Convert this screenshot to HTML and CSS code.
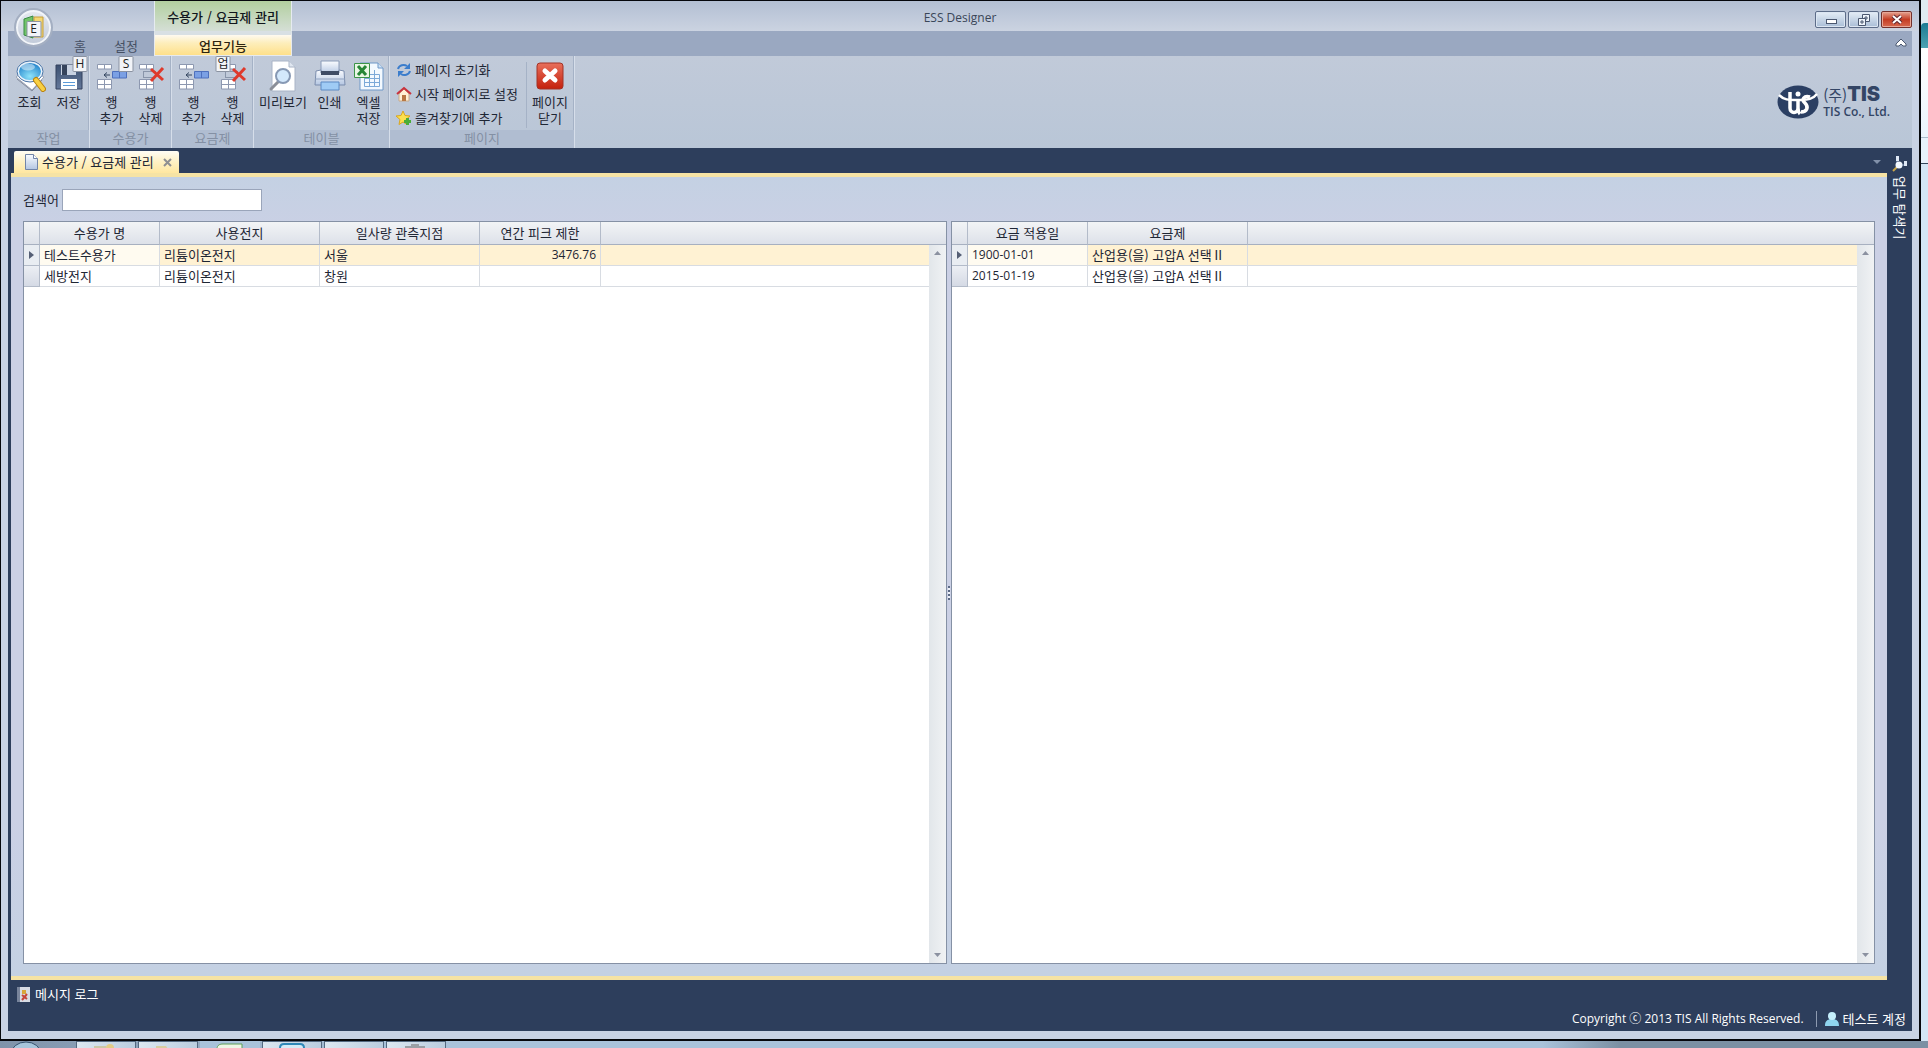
FILE: index.html
```
<!DOCTYPE html>
<html lang="ko">
<head>
<meta charset="utf-8">
<title>ESS Designer</title>
<link rel="stylesheet" href="styles.css">
</head>
<body>
<svg class="defs" aria-hidden="true">
  <defs>
    <linearGradient id="steel" x1="0" y1="0" x2="0" y2="1"><stop offset="0" stop-color="#fafcff"/><stop offset="1" stop-color="#b4c6e2"/></linearGradient>
    <linearGradient id="red" x1="0" y1="0" x2="0" y2="1"><stop offset="0" stop-color="#e8705c"/><stop offset="1" stop-color="#c4200c"/></linearGradient>
    <radialGradient id="lens" cx=".5" cy=".75" r=".8"><stop offset="0" stop-color="#8fe4fa"/><stop offset="1" stop-color="#1173c4"/></radialGradient>
    <linearGradient id="disk" x1="0" y1="0" x2="0" y2="1"><stop offset="0" stop-color="#3c5070"/><stop offset="1" stop-color="#65799b"/></linearGradient>
    <g id="cells"><path d="M1.500 1.500h14v4.500h-14zM1.500 16.500h14v9.500h-14zM8.500 16.500v9.500M1.500 21.500h14" fill="#fff" stroke="#8d98b0"/><path d="M8.500 1.500v4.500" stroke="#8d98b0"/></g>
    <symbol id="row-add" viewBox="0 0 32 32"><use href="#cells" y="3"/><path d="M16.500 11.500h14v6.500h-14zM23.500 11.500v6.500" fill="#7ba0e4" stroke="#4e70bd"/><path d="M14 15H8m3-2.500L8 15l3 2.500" fill="none" stroke="#33455f"/></symbol>
    <symbol id="row-del" viewBox="0 0 32 32"><use href="#cells" x="3" y="3"/><path d="M8.500 11.500h12v6h-12z" fill="none" stroke="#53617b" stroke-dasharray="1 1"/><path d="M16 9l12 11M28 8L16 21" stroke="#df3a2c" stroke-width="3"/></symbol>
  </defs>
</svg>
<div class="desktop">
  <div class="window">
    <header class="titlebar">
      <h1 class="app-title">ESS Designer</h1>
      <div class="context-title">수용가 / 요금제 관리</div>
      <div class="window-buttons">
        <button type="button" aria-label="최소화"><svg width="14" height="14"><rect x="2.500" y="6.500" width="10" height="4" fill="#fff" stroke="#4b5870"/></svg></button>
        <button type="button" aria-label="이전 크기로"><svg width="14" height="14" fill="#eef4fb" stroke="#4b5870"><path d="M5.500 1.500h7v7h-7zM8 4h2v2H8z"/><path d="M1.500 5.500h7v7h-7z"/><path d="M4 8h2v2H4z"/></svg></button>
        <button type="button" class="close" aria-label="닫기"><svg width="14" height="14"><path d="M3 3l8 7M11 3l-8 7" stroke="#5f2730" stroke-width="4"/><path d="M3 3l8 7M11 3l-8 7" stroke="#fff" stroke-width="2"/></svg></button>
      </div>
      <nav class="ribbon-tabs">
        <a href="#home">홈<kbd>H</kbd></a>
        <a href="#settings">설정<kbd>S</kbd></a>
      </nav>
      <a class="context-tab" href="#work">업무기능<kbd>업</kbd></a>
      <div class="tab-rest"><button type="button" aria-label="리본 최소화"><svg width="12" height="10"><path d="M1 8v-2l5-5 5 5v2H8L6 6 4 8z" fill="#fff" stroke="#4b5870"/></svg></button></div>
      <button type="button" class="app-button" aria-label="메뉴"><svg width="24" height="26" viewBox="0 0 24 26"><path d="M2 4l9-3v22l-9-3z" fill="#72c46a" stroke="#398b43"/><path d="M12 2h9v20h-9z" fill="#f3d774" stroke="#c69f3a"/><path d="M5 7h13v13H5z" fill="#e9f5df"/></svg><kbd>E</kbd></button>
    </header>

    <div class="ribbon">
      <section class="group">
        <div class="items">
          <button type="button"><svg width="32" height="32" viewBox="0 0 32 32"><path d="M2 17L14 8l16 9-12 13z" fill="#fff" stroke="#9fa6b5"/><path d="M3 19l15 12 10-11" fill="none" stroke="#848c9e"/><ellipse cx="16" cy="11.500" rx="12" ry="9.500" fill="url(#lens)" stroke="#e8f2fb" stroke-width="2"/><ellipse cx="16" cy="11.500" rx="13" ry="10.500" fill="none" stroke="#4c76a8"/><ellipse cx="14" cy="7" rx="7" ry="3.500" fill="#fff" opacity=".45"/><path d="M22 20l7 9" stroke="#b98310" stroke-width="6" stroke-linecap="round"/><path d="M22 20l7 9" stroke="#f8cf42" stroke-width="4" stroke-linecap="round"/></svg><span>조회</span></button>
          <button type="button"><svg width="32" height="32" viewBox="0 0 32 32"><path d="M3 5h23l3 3v21H3z" fill="url(#disk)" stroke="#34435e"/><path d="M8 5h15v10H8z" fill="#c8d2e2"/><path d="M9 5h5v10H9z" fill="#35435c"/><path d="M8 19h16v10H8z" fill="#fff"/><path d="M10 22.500h12M10 25.500h12" stroke="#5c9bd8"/></svg><span>저장</span></button>
        </div>
        <h2>작업</h2>
      </section>
      <section class="group">
        <div class="items">
          <button type="button"><svg width="32" height="32"><use href="#row-add"/></svg><span>행<br>추가</span></button>
          <button type="button"><svg width="32" height="32"><use href="#row-del"/></svg><span>행<br>삭제</span></button>
        </div>
        <h2>수용가</h2>
      </section>
      <section class="group">
        <div class="items">
          <button type="button"><svg width="32" height="32"><use href="#row-add"/></svg><span>행<br>추가</span></button>
          <button type="button"><svg width="32" height="32"><use href="#row-del"/></svg><span>행<br>삭제</span></button>
        </div>
        <h2>요금제</h2>
      </section>
      <section class="group">
        <div class="items">
          <button type="button" class="wide"><svg width="32" height="32" viewBox="0 0 32 32"><path d="M5 1h17l6 6v24H5z" fill="#fff" stroke="#a9b4c6"/><path d="M22 1v6h6" fill="#dfe6f0" stroke="#a9b4c6"/><path d="M11 22l-7 7" stroke="#8b8f98" stroke-width="3" stroke-linecap="round"/><circle cx="16" cy="16" r="7" fill="#d3e8fb" stroke="#8799b4" stroke-width="2"/></svg><span>미리보기</span></button>
          <button type="button"><svg width="32" height="32" viewBox="0 0 32 32"><path d="M7 1h18v13H7z" fill="url(#steel)" stroke="#8a9bb8"/><path d="M2 11l5-1v3h18v-3l5 1 1 14H1z" fill="url(#steel)" stroke="#7b8dad"/><path d="M7 11h18v4H7z" fill="#3e4c65"/><path d="M1 19h30" stroke="#90a2c0"/><path d="M7 22h18v8H7z" fill="#9fcbf5" stroke="#5d8ac4"/></svg><span>인쇄</span></button>
          <button type="button"><svg width="32" height="32" viewBox="0 0 32 32"><path d="M7 3h18l5 5v22H7z" fill="#f3f9ff" stroke="#6e98c8"/><path d="M25 3v5h5" fill="#cfe2f5" stroke="#6e98c8"/><path d="M11.500 14.500h15v12h-15zM11.500 18.500h15M11.500 22.500h15M16.500 14.500v12M21.500 10v16" fill="none" stroke="#7ba9d8"/><path d="M1.500 3.500h15v14h-15z" fill="#e9f7e4" stroke="#3c9448"/><path d="M5 6l8 9M13 6l-8 9" stroke="#278636" stroke-width="3"/></svg><span>엑셀<br>저장</span></button>
        </div>
        <h2>테이블</h2>
      </section>
      <section class="group">
        <div class="items">
          <div class="small-items">
            <button type="button"><svg width="16" height="16" viewBox="0 0 16 16" fill="none" stroke="#3b7dcc" stroke-width="2"><path d="M2 7c1-4 6-5 9-3M14 9c-1 4-6 5-9 3"/><path d="M14 1v6H8zM2 15V9h6z" fill="#3b7dcc" stroke="none"/></svg>페이지 초기화</button>
            <button type="button"><svg width="16" height="16" viewBox="0 0 16 16"><path d="M3 8v7h10V8L8 3z" fill="#fff2d6" stroke="#c8a888"/><path d="M1 8l7-6 7 6" fill="none" stroke="#c9323c" stroke-width="2"/><path d="M6 9h4v6H6z" fill="#b87844"/></svg>시작 페이지로 설정</button>
            <button type="button"><svg width="16" height="16" viewBox="0 0 16 16"><path d="M7 1l2 4.500 5 .5-4 3.500 1 5-4-2.500-4 2.500 1-5L0 6l5-.500z" fill="#fbe04e" stroke="#d9a520"/><path d="M11.500 8v7M8 11.500h7" stroke="#48ad38" stroke-width="3"/></svg>즐겨찾기에 추가</button>
          </div>
          <button type="button" class="page-close"><svg width="32" height="32" viewBox="0 0 32 32"><rect x="3" y="3" width="26" height="26" rx="3" fill="url(#red)" stroke="#a33327"/><path d="M11 11l10 9M21 11l-10 9" stroke="#fff" stroke-width="5" stroke-linecap="round"/></svg><span>페이지<br>닫기</span></button>
        </div>
        <h2>페이지</h2>
      </section>
      <div class="brand">
        <svg width="42" height="34" viewBox="0 0 42 34"><ellipse cx="21" cy="17" rx="20.500" ry="16.500" fill="#2b3f63"/><path d="M2 10c5 5 10 5 16 5h6c7 0 12-1 16-6" fill="none" stroke="#fff" stroke-width="2.500"/><path d="M13 7v16c0 6 8 6 8 0v-8M21 23c0 3 1 5 2 6M33 12c-6-2-9 3-5 6 4 4 2 9-4 9" fill="none" stroke="#fff" stroke-width="3.500"/><circle cx="21" cy="9" r="2.500" fill="#fff"/></svg>
        <p><span class="brand-name">(주)<b>TIS</b></span><span class="brand-sub">TIS Co., Ltd.</span></p>
      </div>
    </div>

    <div class="workspace">
      <div class="doc">
        <div class="doc-tabs">
          <a class="doc-tab" href="#page"><svg width="13" height="16" viewBox="0 0 13 16"><path d="M.500 .500h8l4 4v11H.500z" fill="url(#steel)" stroke="#7285a8"/><path d="M8.500 .500v4h4" fill="#fff" stroke="#7285a8"/></svg><span>수용가 / 요금제 관리</span><svg width="9" height="9"><path d="M1 1l7 7M8 1l-7 7" stroke="#8f8f92" stroke-width="2"/></svg></a>
          <button type="button" class="tab-menu" aria-label="탭 목록"><svg width="8" height="4"><path d="M0 0h8L4 4z" fill="#8291aa"/></svg></button>
        </div>
        <main class="panel">
          <div class="search"><label for="q">검색어</label><input id="q" type="text"></div>
          <div class="panes">
            <div class="pane">
              <table>
                <colgroup><col class="c-mark"><col class="c-m"><col class="c-l"><col class="c-l"><col class="c-n"><col></colgroup>
                <thead><tr><th></th><th>수용가 명</th><th>사용전지</th><th>일사량 관측지점</th><th>연간 피크 제한</th><th></th></tr></thead>
                <tbody>
                  <tr class="selected"><td><svg width="5" height="8"><path d="M0 0l5 4-5 4z" fill="#555f75"/></svg></td><td>테스트수용가</td><td>리튬이온전지</td><td>서울</td><td class="num">3476.76</td><td></td></tr>
                  <tr><td></td><td>세방전지</td><td>리튬이온전지</td><td>창원</td><td></td><td></td></tr>
                </tbody>
              </table>
              <div class="scroll"><svg width="7" height="4"><path d="M0 4h7L3.500 0z" fill="#8b91a0"/></svg><svg width="7" height="4"><path d="M0 0h7L3.500 4z" fill="#8b91a0"/></svg></div>
            </div>
            <div class="splitter"><i></i></div>
            <div class="pane">
              <table>
                <colgroup><col class="c-mark"><col class="c-m"><col class="c-l"><col></colgroup>
                <thead><tr><th></th><th>요금 적용일</th><th>요금제</th><th></th></tr></thead>
                <tbody>
                  <tr class="selected"><td><svg width="5" height="8"><path d="M0 0l5 4-5 4z" fill="#555f75"/></svg></td><td class="date">1900-01-01</td><td>산업용(을) 고압A 선택Ⅱ</td><td></td></tr>
                  <tr><td></td><td class="date">2015-01-19</td><td>산업용(을) 고압A 선택Ⅱ</td><td></td></tr>
                </tbody>
              </table>
              <div class="scroll"><svg width="7" height="4"><path d="M0 4h7L3.500 0z" fill="#8b91a0"/></svg><svg width="7" height="4"><path d="M0 0h7L3.500 4z" fill="#8b91a0"/></svg></div>
            </div>
          </div>
        </main>
      </div>
      <aside class="side"><svg width="16" height="16" viewBox="0 0 16 16"><path d="M4 0h3v5H4zM12 5h3v5h-3z" fill="#dfe8f5"/><path d="M5 5v4h7" fill="none" stroke="#8aa0c0"/><path d="M5 11l-4 4" stroke="#c9a74a" stroke-width="2"/><circle cx="7" cy="9" r="3.500" fill="#f2f8ff"/></svg><button type="button">업무 탐색기</button></aside>
    </div>

    <footer class="status">
      <button type="button" class="log"><svg width="13" height="15" viewBox="0 0 13 15"><path d="M0 0h13v15H0z" fill="#d8dce4"/><path d="M0 0h3v15H0z" fill="#78849b"/><path d="M5 3h4v4H5z" fill="#d8a63b"/><path d="M5 8l5 4M10 7l-5 6" stroke="#c4453c" stroke-width="2"/></svg>메시지 로그</button>
      <div class="status-right"><span class="copyright">Copyright ⓒ 2013 TIS All Rights Reserved.</span><span class="user"><svg width="14" height="16" viewBox="0 0 14 16"><path d="M0 15c0-6 3-6 5-7h4c2 1 5 1 5 7z" fill="#8fd4ee"/><circle cx="7" cy="5" r="4" fill="#c4eefb"/></svg>테스트 계정</span></div>
    </footer>
  </div>
  <div class="behind"><div class="behind-top"></div><div class="behind-tab"></div><div class="behind-body"></div><div class="behind-line"></div></div>
  <div class="taskbar">
    <svg class="start" width="32" height="7"><ellipse cx="16" cy="13" rx="15" ry="12" fill="#a8c6dc" stroke="#33506c"/></svg>
    <i><svg width="28" height="7"><path d="M2 7V4h12v3z" fill="#cbc7a8"/><circle cx="18" cy="6" r="4" fill="#e2cc86"/></svg></i>
    <i><svg width="28" height="7"><path d="M2 7V4h10l2 3z" fill="#d8cda0"/></svg></i>
    <i class="flat"><svg width="28" height="7"><path d="M1 7c0-4 3-5 6-5h19v5z" fill="#eef6e6" stroke="#5f9e58"/></svg></i>
    <i><svg width="28" height="7"><path d="M2 9V6c0-3 2-4 4-4h16c3 0 4 1 4 4v3" fill="#d5ebf7" stroke="#2f88b8" stroke-width="2"/></svg></i>
    <i></i>
    <i><svg width="28" height="7"><path d="M3 7V4h6V2h8v2h6v3z" fill="#9a9fa5"/></svg></i>
  </div>
</div>
</body>
</html>
```
FILE: styles.css
```
* { box-sizing: border-box; }
body { margin: 0; font: 13px/16px "Noto Sans CJK KR", sans-serif; color: #1e2634; background: #d5e5f2; }
button { font: inherit; color: inherit; border: 0; background: none; padding: 0; }
a { color: inherit; text-decoration: none; }
h1, h2, p { margin: 0; font: inherit; }
svg { display: block; flex: none; }
.defs { position: absolute; width: 0; height: 0; }

.desktop { display: grid; grid-template: minmax(0, 1fr) 7px / minmax(0, 1fr) 7px; height: 100vh; }
.window { display: flex; flex-direction: column; padding: 0 7px 8px; background: #c8d2e4; border: solid #05070c; border-width: 1px 2px 2px 1px; }

/* title bar and ribbon tabs */
.titlebar { position: relative; display: grid; grid-template: 30px 25px / 146px 138px minmax(0, 1fr); margin: 0 -7px; padding: 0 7px; background: linear-gradient(#b3bfd3, #cbd3e1 30px, #c8d2e4 30px); }
.app-title { grid-area: 1 / 1 / 2 / 4; display: grid; place-items: center; padding-top: 2px; font: 12px "Open Sans", sans-serif; color: #3a4658; }
.context-title { grid-area: 1 / 2; display: grid; place-items: center; padding-top: 2px; font-weight: 500; color: #10151c; background: linear-gradient(#b2cf9f, #d5dfd6); border: solid #e6ebf0; border-width: 0 1px; }
.window-buttons { grid-area: 1 / 3; display: flex; justify-self: end; gap: 2px; padding-top: 10px; }
.window-buttons button { display: grid; place-items: center; width: 31px; height: 17px; background: linear-gradient(#e5eef7, #a9bdd6); border: 1px solid #5d6d89; border-radius: 2px; box-shadow: inset 0 0 0 1px #dce6f2; }
.window-buttons .close { background: linear-gradient(#e6a391, #c43d24 50%, #d86a50); border-color: #73312d; box-shadow: inset 0 0 0 1px #e8a797; }
.ribbon-tabs { grid-area: 2 / 1; display: flex; justify-content: end; gap: 20px; padding: 7px 15px 0 0; background: #9aa8c1; color: #465064; }
.ribbon-tabs a, .context-tab { position: relative; width: 26px; text-align: center; }
.context-tab { grid-area: 2 / 2; width: auto; padding-top: 3px; font-weight: 500; color: #2c2410; background: linear-gradient(#fffaf0, #fdeebb 40%, #ffe08a); border: 1px solid #e8ebee; border-top: 4px solid #d9e0e4; }
kbd { position: absolute; left: 50%; top: 18px; display: grid; place-items: center; min-width: 15px; height: 16px; translate: -50% 0; font: 12px/14px "Open Sans", "Noto Sans CJK KR", sans-serif; color: #222; background: #f2f4f8; border: 1px solid #8b93a2; border-radius: 1px; }
.context-tab kbd { top: 21px; }
.tab-rest { grid-area: 2 / 3; display: flex; justify-content: end; padding: 7px 5px 0 0; background: #9aa8c1; }
.tab-rest button { height: 10px; }
.app-button { position: absolute; left: 13px; top: 7px; display: grid; place-items: center; width: 39px; height: 39px; border-radius: 50%; background: linear-gradient(#e6eaf1, #c1cad9); border: 2px solid #a4afc2; box-shadow: inset 0 0 0 2px #f2f5f9; }
.app-button kbd { top: 11px; }

/* ribbon */
.ribbon { display: flex; height: 92px; background: linear-gradient(#c1cad9, #b9c6d7); }
.group { display: flex; flex-direction: column; border-right: 1px solid #d6deea; box-shadow: inset -1px 0 #a5b2c6; }
.items { display: flex; flex: 1; padding: 4px 1px 0 2px; }
.items > button { display: flex; flex-direction: column; align-items: center; gap: 2px; width: 39px; line-height: 16px; white-space: nowrap; }
.items > .wide { width: 54px; }
.group h2 { height: 18px; line-height: 16px; text-align: center; color: #8490a4; background: #b0bdd1; }
.small-items { display: flex; flex-direction: column; gap: 8px; width: 135px; margin: 2px 0; padding-left: 4px; border-right: 1px solid #a5b2c6; }
.small-items button { display: flex; align-items: center; gap: 3px; height: 16px; white-space: nowrap; }
.items > .page-close { width: 46px; }
.brand { display: flex; align-items: center; gap: 4px; margin-left: auto; padding-right: 22px; color: #334565; }
.brand p { display: flex; flex-direction: column; }
.brand-name { font-size: 15px; line-height: 18px; white-space: nowrap; }
.brand b { font: 900 20px/18px Inter, sans-serif; }
.brand-sub { font: 600 12px/16px "Open Sans", sans-serif; }

/* document area */
.workspace { display: flex; flex: 1; min-height: 0; padding-left: 3px; background: #2d3e5c; }
.doc { display: flex; flex: 1; flex-direction: column; min-width: 0; }
.doc-tabs { display: flex; justify-content: space-between; padding: 3px 6px 0 3px; }
.doc-tab { display: flex; align-items: center; gap: 4px; height: 22px; padding: 0 7px 0 11px; background: linear-gradient(#fffdf5, #fff1c4 50%, #ffe7a0); border-radius: 2px 2px 0 0; white-space: nowrap; }
.doc-tab span { margin-right: 5px; }
.panel { display: flex; flex: 1; flex-direction: column; gap: 10px; padding: 12px; background: linear-gradient(#c4d1e3, #cbd0e5 60px, #cbd0e5 80%, #c4d1e3); border: solid #f6e3a4; border-width: 4px 0; }
.search { display: flex; align-items: center; gap: 3px; height: 22px; }
.search input { width: 200px; height: 22px; font: inherit; border: 1px solid #9aa5ba; background: #fff; }
.panes { display: grid; grid-template-columns: minmax(0, 1fr) 4px minmax(0, 1fr); flex: 1; }
.pane { display: grid; grid-template: 23px minmax(0, 1fr) / minmax(0, 1fr) 17px; background: #fff; border: 1px solid #8591a5; }
.pane table { grid-area: 1 / 1 / 3 / 3; align-self: start; width: 100%; table-layout: fixed; border-collapse: separate; border-spacing: 0; }
.c-mark { width: 16px; }
.c-m { width: 120px; }
.c-l { width: 160px; }
.c-n { width: 121px; }
th, td { padding: 0 4px; white-space: nowrap; font-weight: 400; }
th { height: 23px; background: linear-gradient(#f2f4f6, #dde1e9); border-right: 1px solid #b3bbc9; border-bottom: 1px solid #a7b0c0; }
th:last-child, td:last-child { border-right: 0; }
td { height: 21px; border-right: 1px solid #d8dce2; border-bottom: 1px solid #d8dce2; }
td:first-child { padding-left: 5px; background: linear-gradient(#eceff4, #d5dae5); border-color: #b3bbc9; }
.selected td { background: #fff2d3; }
.selected td:nth-child(2) { background: #fffbf0; }
.selected td:first-child { background: #e9edf2; }
.num, .date { font: 12px/16px "Open Sans", sans-serif; }
.num { text-align: right; }
.scroll { grid-area: 2 / 2; z-index: 1; display: flex; flex-direction: column; justify-content: space-between; align-items: center; padding: 6px 0; background: linear-gradient(90deg, #e2e6ea, #f0f2f4); }
.splitter { display: grid; place-items: center; }
.splitter i { width: 2px; height: 14px; background: repeating-linear-gradient(#5c6a86 0 2px, #eef1f8 2px 4px); }
.side { display: flex; flex-direction: column; align-items: center; gap: 4px; width: 25px; padding-top: 8px; color: #fff; }
.side button { writing-mode: vertical-rl; text-orientation: sideways; line-height: 16px; }

/* status area */
.status { display: flex; flex-direction: column; justify-content: space-between; height: 51px; padding: 6px 6px 4px 9px; color: #fff; background: #2d3e5c; }
.log, .user { display: flex; align-items: center; gap: 5px; }
.log { align-self: start; }
.status-right { display: flex; align-self: end; gap: 12px; }
.copyright { font: 12px/16px "Open Sans", "Noto Sans CJK KR", sans-serif; }
.user { gap: 4px; padding-left: 8px; border-left: 1px solid #8d9ab0; }

/* what shows around the window */
.behind { display: flex; flex-direction: column; background: #d3e6f5; }
.behind-top { height: 23px; background: #dfebf1; }
.behind-tab { height: 25px; background: linear-gradient(#1a7b93, #4ea2b2); border-radius: 4px 0 0; }
.behind-body { height: 90px; background: linear-gradient(#fff, #eaf4fc); border-bottom: 1px solid #a9bccb; }
.behind-line { height: 26px; background: #e7f2fb; border-bottom: 1px solid #31465a; }
.taskbar { grid-column: 1 / 3; display: flex; gap: 2px; padding-left: 10px; background: linear-gradient(90deg, #7f93aa, #a9c2da 20%, #a9c2da 80%, #7b90a3 84%); }
.start { margin-right: 32px; }
.taskbar i { display: flex; justify-content: center; overflow: hidden; width: 60px; background: linear-gradient(90deg, #dce7f1, #bacddf); border: solid #53687f; border-width: 1px 1px 0; }
.taskbar .flat { background: #a9c2da; border-color: #a9c2da; }
```
